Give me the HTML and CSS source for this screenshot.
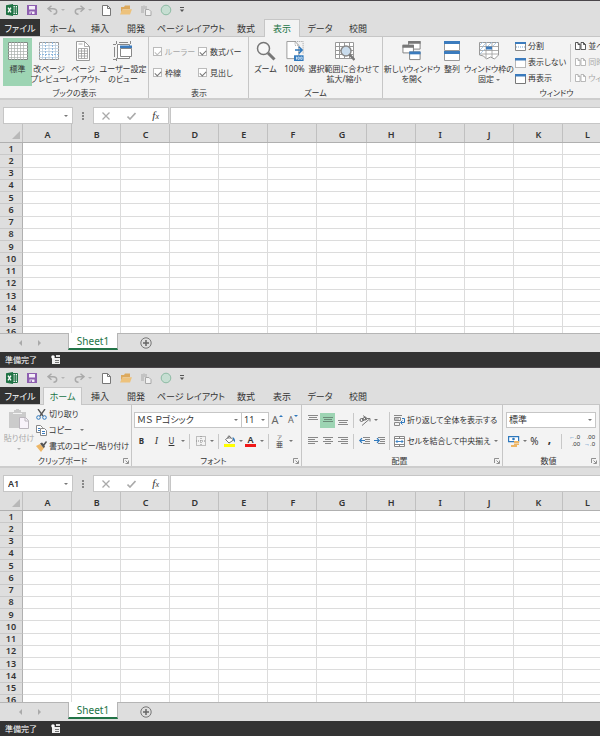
FILE: index.html
```html
<!DOCTYPE html>
<html lang="ja">
<head>
<meta charset="utf-8">
<title>Excel</title>
<link rel="stylesheet" href="styles.css">
</head>
<body>
<svg class="defs" aria-hidden="true">
  <symbol id="excel" viewBox="0 0 12 12"><path fill="#1f7244" d="M0 1.3 7 0v12L0 10.7z"/><path fill="#fff" stroke="#1f7244" d="M7 1.5h4.5v9H7z"/><path stroke="#1f7244" d="M7 4h4.5M7 6h4.5M7 8h4.5M9.3 1.5v9"/><path stroke="#fff" stroke-width="1.3" d="M2 3.7 5 8.3M5 3.7 2 8.3"/></symbol>
  <symbol id="save" viewBox="0 0 10 10"><path fill="#8e5fb0" d="M0 0h10v10H0z"/><path fill="#f4eef8" d="M2 1h6v3.5H2zM2.5 6.5h5V9h-5z"/><path fill="#8e5fb0" d="M3.5 7.2H5V9H3.5z"/></symbol>
  <symbol id="undo" viewBox="0 0 11 10"><path fill="none" stroke="#a9a9a9" stroke-width="1.5" d="M4.5.7 1 3.7l3.5 3M1.3 3.7H6c2.300 0 3.700 1 3.700 2.800S8.500 9.200 6.500 9.200"/></symbol>
  <symbol id="page" viewBox="0 0 9 11"><path fill="#fff" stroke="#777" d="M.5.5h5l3 3v7h-8z"/><path fill="none" stroke="#777" d="M5.500.5v3h3"/></symbol>
  <symbol id="folder" viewBox="0 0 12 10"><path fill="#dca95d" d="M1 2h3l1-1.500h5V4H3L1 8z"/><path fill="#edc27c" d="M2.500 4.200H12L10 9.500H0z"/></symbol>
  <symbol id="pasteq" viewBox="0 0 12 11"><path fill="#c3c3c3" d="M1 1h2l1-1 1 1h2v3H4v4H1z"/><path fill="#f2f2f2" stroke="#a8a8a8" d="M5.500 4.500h3.500l2 2v4H5.500z"/></symbol>
  <symbol id="circle" viewBox="0 0 12 12"><circle cx="6" cy="6" r="4.800" fill="#c6ded2" stroke="#8dbba4"/></symbol>
  <symbol id="more" viewBox="0 0 6 6"><path stroke="#555" d="M1 .5h4"/><path fill="#555" d="M.8 2.500h4.400L3 5z"/></symbol>
  <symbol id="normal" viewBox="0 0 22 20"><path fill="#fff" stroke="#7d8a82" d="M1.500 1.500h19v17h-19z"/><path stroke="#a8afab" stroke-width=".7" d="M1 4.500h20M1 7.500h20M1 10.500h20M1 13.500h20M1 16.500h20M4.500 1v18M7.500 1v18M10.500 1v18M13.500 1v18M16.500 1v18"/></symbol>
  <symbol id="breaks" viewBox="0 0 22 20"><path fill="#fff" stroke="#999" d="M1.500 1.500h19v17h-19z"/><path stroke="#b9cbdc" stroke-width=".8" d="M1 4.500h20M1 7.500h20M1 10.500h20M1 16.500h20M4.500 1v18M11 1v18M17.500 1v18"/><path stroke="#8fb8de" stroke-dasharray="2 1" d="M1 13.500h20M7.500 1v18M14.500 1v18"/></symbol>
  <symbol id="layout" viewBox="0 0 18 20"><path fill="#fff" stroke="#999" d="M2.500.5h8l5 5v14h-13z"/><path fill="none" stroke="#999" stroke-width=".8" d="M10.500.5v5h5M4.500 7.500h9v10h-9zM4.500 10h9M4.500 12.500h9M4.500 15h9M7.500 7.500v10M10.500 7.500v10M4.500 3h4"/></symbol>
  <symbol id="custom" viewBox="0 0 20 20"><path fill="none" stroke="#888" d="M3.500 0v3M0 3.500h3M17.500 0v3M1.500 6v10M0 18.500h3M3.500 17v3M6 1.500h9"/><path fill="#fff" stroke="#888" d="M4.500 3.500h12v14h-12z"/><path fill="#3b7bbd" d="M7 4.500h12v3H7z"/><path fill="#fff" stroke="#888" d="M7.500 7.500h11v8h-11z"/></symbol>
  <symbol id="lens" viewBox="0 0 20 20"><circle cx="7.500" cy="7.500" r="6" fill="#f8f8f8" stroke="#777" stroke-width="1.500"/><path stroke="#777" stroke-width="3" d="m12 12 6.500 6.500"/></symbol>
  <symbol id="hundred" viewBox="0 0 20 21"><path fill="#fff" stroke="#999" d="M1.500.5H10l4 4v14H1.500z"/><path fill="none" stroke="#999" stroke-dasharray="1 1" d="M10 .5h8.500V14M10 .5v4h4"/><path fill="none" stroke="#2e78bd" stroke-width="1.600" d="M10 9.500h7M14 6l3.500 3.500L14 13"/><path fill="#2e78bd" d="M9 15h10v6H9z"/><path stroke="#e4effa" d="M11.500 16.500v3"/><path fill="none" stroke="#e4effa" stroke-width=".8" d="M13 16.800h1.500v2.500H13zM16 16.800h1.500v2.500H16z"/></symbol>
  <symbol id="fit" viewBox="0 0 21 20"><path fill="#fff" stroke="#999" d="M1.500 1.500h18v16h-18zM1.500 5.500h18M1.500 9.500h18M1.500 13.500h18M5.500 1.500v16M10.500 1.500v16M15.500 1.500v16"/><circle cx="12" cy="10" r="5" fill="#c9dced" stroke="#888" stroke-width="1.500"/><path stroke="#777" stroke-width="2.500" d="m15.500 13.500 5 5.500"/></symbol>
  <symbol id="newwin" viewBox="0 0 20 21"><g fill="#fff" stroke="#808080"><path d="M6.500.5h12v8h-12z"/><path d="M.5 4.500h11v8H.5z"/><path d="M7.500 11.500h11v8h-11z"/></g><path fill="#777" d="M6 0h13v3H6zM0 4h12v3H0z"/><path fill="#3b7bbd" d="M7 11h12v3H7z"/></symbol>
  <symbol id="arrange" viewBox="0 0 18 20"><path fill="#fff" stroke="#999" d="M1.500.5h15v9h-15zM1.500 10.500h15v9h-15z"/><path fill="#3b7bbd" d="M1 0h16v3H1zM1 10h16v3H1z"/></symbol>
  <symbol id="freeze" viewBox="0 0 20 20"><path fill="#fff" stroke="#999" d="M.5 1.500h19V14l-4 4-4-2-4 2-3-3-4-1z"/><path fill="none" stroke="#999" stroke-width=".8" d="M0 5.500h20M0 9.500h20M0 13h19M7 1v16M13 1v16"/><path stroke="#9cbfe0" stroke-width=".8" d="m1 4 3-3M4 5l4-4M9 5l4-4M14 5l4-4M1 9l4-4M1 13l5-5"/><path fill="#3b7bbd" d="M7 5.500h6v3H7z"/></symbol>
  <symbol id="split" viewBox="0 0 11 11"><path fill="#fff" stroke="#888" d="M.5 1.500h10v8H.5z"/><path fill="#3b7bbd" d="M0 1h11v2H0z"/><path stroke="#7ba6d1" stroke-dasharray="1 1" d="M1 6h9"/></symbol>
  <symbol id="hide" viewBox="0 0 11 11"><path fill="#fff" stroke="#777" stroke-dasharray="1 1" d="M.5 1.500h10v9H.5z"/><path fill="#3b7bbd" d="M0 1h11v2.500H0z"/></symbol>
  <symbol id="show" viewBox="0 0 11 11"><path fill="#fff" stroke="#777" d="M.5 1.500h10v9H.5z"/><path fill="#3b7bbd" d="M0 1h11v2.500H0z"/></symbol>
  <symbol id="side" viewBox="0 0 11 10"><path fill="#fff" stroke="currentColor" stroke-width=".8" d="M.5 1.500h2.500l2 2v5H.5zM6 1.500h2.500l2 2v5H6zM3 1.500v2h2M8.500 1.500v2h2"/></symbol>
  <symbol id="paste" viewBox="0 0 20 21"><path fill="#cbcbcb" d="M0 3h5V1h2V0h3v1h2v2h5v6h-6v10H0z"/><path stroke="#f3f3f3" d="M4 4.500h9"/><path fill="#f8f3fa" stroke="#bbb6bd" d="M10.500 8.500h6l3 3v8h-9z"/><path fill="none" stroke="#bbb6bd" d="M16 8.500v3.500h3.500"/></symbol>
  <symbol id="cut" viewBox="0 0 11 11"><path stroke="#555" stroke-width="1.300" d="m2 0 5 7M9 0 4 7"/><circle cx="2.500" cy="8.500" r="1.800" fill="none" stroke="#2e78bd"/><circle cx="8.500" cy="8.500" r="1.800" fill="none" stroke="#2e78bd"/></symbol>
  <symbol id="copy" viewBox="0 0 11 11"><path fill="#fff" stroke="#888" d="M.5.5h4l2 2v5h-6z"/><path fill="#fff" stroke="#888" d="M4.500 3.500h4l2 2v5h-6z"/><path stroke="#3b7bbd" d="M2 3.500h2M2 5.500h2M6 6.500h3M6 8.500h3"/></symbol>
  <symbol id="brush" viewBox="0 0 11 11"><path fill="#edb666" d="m0 5 4-2 4 4-3 4z"/><path fill="#555" d="m4 2.500 2-1 1.500 1.500L10 0l1 1-2.500 3.500L9 6 7.500 7z"/></symbol>
  <symbol id="launch" viewBox="0 0 6 6"><path fill="none" stroke="#777" stroke-width=".8" d="M.5 5V.5H5M2.500 2.500 5 5M5.500 2.500v3h-3"/></symbol>
  <symbol id="border" viewBox="0 0 10 10"><path fill="none" stroke="#888" stroke-dasharray="1 1" d="M.5.5h9v9h-9zM5 0v10M0 5h10"/></symbol>
  <symbol id="fill" viewBox="0 0 12 12"><path fill="#fff" stroke="#666" stroke-width=".9" d="m1.500 4.500 4-3 4 3.500-4.500 3z"/><path fill="none" stroke="#666" stroke-width=".8" d="M4 4V1.500q1-1.500 2 0V4"/><path fill="#2e78bd" d="M8.500 2Q11.500 3 11 7.500 9 6 8.500 2z"/><path fill="#ff0" d="M0 9h11v3H0z"/></symbol>
  <symbol id="atop" viewBox="0 0 10 12"><path stroke="#888" d="M0 1.500h10M1 3.500h8M0 5.500h10"/></symbol>
  <symbol id="amid" viewBox="0 0 10 12"><path stroke="#6c8b79" d="M0 3.500h10M1 5.500h8M0 7.500h10"/></symbol>
  <symbol id="abot" viewBox="0 0 10 12"><path stroke="#888" d="M0 6.500h10M1 8.500h8M0 10.500h10"/></symbol>
  <symbol id="left" viewBox="0 0 10 8"><path stroke="#888" d="M0 .5h10M0 2.500h7M0 4.500h10M0 6.500h7"/></symbol>
  <symbol id="center" viewBox="0 0 10 8"><path stroke="#888" d="M0 .5h10M2 2.500h6M0 4.500h10M2 6.500h6"/></symbol>
  <symbol id="right" viewBox="0 0 10 8"><path stroke="#888" d="M0 .5h10M3 2.500h7M0 4.500h10M3 6.500h7"/></symbol>
  <symbol id="outdent" viewBox="0 0 12 8"><path stroke="#888" d="M4 .5h7M6 2.500h5M6 4.500h5M4 6.500h7"/><path fill="none" stroke="#2e78bd" stroke-width="1.200" d="M6 3.500H1M3 1.200.8 3.500 3 5.800"/></symbol>
  <symbol id="indent" viewBox="0 0 12 8"><path stroke="#888" d="M4 .5h7M6 2.500h5M6 4.500h5M4 6.500h7"/><path fill="none" stroke="#2e78bd" stroke-width="1.200" d="M0 3.500h5M3 1.200l2.200 2.300L3 5.800"/></symbol>
  <symbol id="orient" viewBox="0 0 12 11"><path fill="none" stroke="#777" d="M3 10.500 10.500 4M8 3.500h3v3"/><circle cx="2.500" cy="5" r="1.500" fill="none" stroke="#666"/><circle cx="6" cy="3.500" r="1.500" fill="none" stroke="#666"/><path stroke="#666" d="m3 3 2 3M4.500.5 7.500 5"/></symbol>
  <symbol id="wrap" viewBox="0 0 11 11"><path fill="none" stroke="#888" d="M0 .5h8M.5 2.500h6v3h-6zM.5 7.500h5v3h-5zM1 4h4"/><path fill="none" stroke="#2e78bd" d="M8 3.500h2.500v4H7M8.500 5.500l-2 2 2 2"/></symbol>
  <symbol id="merge" viewBox="0 0 11 11"><path fill="#fff" stroke="#888" d="M.5.5h10v10H.5zM.5 2.500h10M.5 8.500h10M5.500.5v2M5.500 8.500v2"/><path fill="none" stroke="#2e78bd" stroke-width=".9" d="M2 5.500h7M3.500 4 2 5.500 3.500 7M7.500 4 9 5.500 7.500 7"/></symbol>
  <symbol id="money" viewBox="0 0 12 11"><path fill="#fff" stroke="#2e78bd" stroke-width="1.200" d="M.6.6h10v5H.6z"/><circle cx="5.500" cy="3" r="1.300" fill="#2e78bd"/><path fill="#edb666" d="M6 5h5v2H6zM6 7.500h5v1.500H6zM3 9h6v2H3z"/></symbol>
  <symbol id="cross" viewBox="0 0 8 8"><path stroke="#aaa" stroke-width="1.300" d="m.5.5 7 7M7.500.5l-7 7"/></symbol>
  <symbol id="check" viewBox="0 0 9 8"><path fill="none" stroke="#aaa" stroke-width="1.600" d="m.5 4.500 2.500 2.500 5.500-6"/></symbol>
  <symbol id="plus" viewBox="0 0 12 12"><circle cx="6" cy="6" r="5.200" fill="none" stroke="#777"/><path stroke="#666" stroke-width="1.500" d="M6 3v6M3 6h6"/></symbol>
  <symbol id="macro" viewBox="0 0 9 9"><path fill="#eee" d="M1 3h8v6H1z"/><path stroke="#777" d="M4 5.500h4M4 7.500h4"/><circle cx="2" cy="2" r="1.800" fill="#fff"/><path fill="#ddd" d="M5 0h4v2H5z"/></symbol>
</svg>

<section class="window">
  <header class="quick">
    <span class="q"><svg width="12" height="12"><use href="#excel"/></svg></span>
    <button class="q" aria-label="上書き保存"><svg width="10" height="10"><use href="#save"/></svg></button>
    <button class="q wide" aria-label="元に戻す"><svg width="11" height="10"><use href="#undo"/></svg><i class="caret pale"></i></button>
    <button class="q wide" aria-label="やり直し"><svg class="flip" width="11" height="10"><use href="#undo"/></svg><i class="caret pale"></i></button>
    <button class="q" aria-label="新規作成"><svg width="9" height="11"><use href="#page"/></svg></button>
    <button class="q" aria-label="開く"><svg width="12" height="10"><use href="#folder"/></svg></button>
    <button class="q" aria-label="貼り付け"><svg width="12" height="11"><use href="#pasteq"/></svg></button>
    <button class="q" aria-label="図形"><svg width="12" height="12"><use href="#circle"/></svg></button>
    <button class="q slim" aria-label="カスタマイズ"><svg width="6" height="6"><use href="#more"/></svg></button>
  </header>
  <nav class="tabs">
    <a href="#" class="file">ファイル</a><a href="#">ホーム</a><a href="#">挿入</a><a href="#">開発</a><a href="#" class="long">ページ レイアウト</a><a href="#">数式</a><a href="#" class="active">表示</a><a href="#">データ</a><a href="#">校閲</a>
  </nav>
  <div class="ribbon">
    <div class="group g-views">
      <div class="tools">
        <button class="big w29 on"><svg width="22" height="20"><use href="#normal"/></svg><span>標準</span></button>
        <button class="big w34"><svg width="22" height="20"><use href="#breaks"/></svg><span>改ページ<br>プレビュー</span></button>
        <button class="big w34"><svg width="18" height="20"><use href="#layout"/></svg><span>ページ<br>レイアウト</span></button>
        <button class="big w46"><svg width="20" height="20"><use href="#custom"/></svg><span>ユーザー設定<br>のビュー</span></button>
      </div>
      <div class="title"><span>ブックの表示</span></div>
    </div>
    <div class="group g-show">
      <div class="checks">
        <label class="off"><input type="checkbox" checked disabled>ルーラー</label>
        <label><input type="checkbox" checked>数式バー</label>
        <label><input type="checkbox" checked>枠線</label>
        <label><input type="checkbox" checked>見出し</label>
      </div>
      <div class="title"><span>表示</span></div>
    </div>
    <div class="group g-zoom">
      <div class="tools">
        <button class="big w29"><svg width="20" height="20"><use href="#lens"/></svg><span>ズーム</span></button>
        <button class="big w29"><svg width="20" height="20"><use href="#hundred"/></svg><span>100%</span></button>
        <button class="big w70"><svg width="21" height="20"><use href="#fit"/></svg><span>選択範囲に合わせて<br>拡大/縮小</span></button>
      </div>
      <div class="title"><span>ズーム</span></div>
    </div>
    <div class="group g-window">
      <div class="tools">
        <button class="big w54"><svg width="20" height="20"><use href="#newwin"/></svg><span>新しいウィンドウ<br>を開く</span></button>
        <button class="big w26"><svg width="18" height="20"><use href="#arrange"/></svg><span>整列</span></button>
        <button class="big w48"><svg width="20" height="20"><use href="#freeze"/></svg><span>ウィンドウ枠の<br>固定 <i class="caret"></i></span></button>
        <div class="list">
          <button><svg width="11" height="11"><use href="#split"/></svg>分割</button>
          <button><svg width="11" height="11"><use href="#hide"/></svg>表示しない</button>
          <button><svg width="11" height="11"><use href="#show"/></svg>再表示</button>
        </div>
        <i class="rule tall"></i>
        <div class="list compare">
          <button><svg width="11" height="10"><use href="#side"/></svg>並べて比較</button>
          <button disabled><svg width="11" height="10"><use href="#side"/></svg>同時にスクロール</button>
          <button disabled><svg width="11" height="10"><use href="#side"/></svg>ウィンドウの位置</button>
        </div>
      </div>
      <div class="title"><span>ウィンドウ</span></div>
    </div>
  </div>
  <div class="formula">
    <div class="namebox"><input aria-label="名前ボックス" value=""><i class="caret"></i></div>
    <span class="dots"></span>
    <div class="fxbox"><button aria-label="キャンセル"><svg width="8" height="8"><use href="#cross"/></svg></button><button aria-label="入力"><svg width="9" height="8"><use href="#check"/></svg></button><button class="fx"><em>f<small>x</small></em></button></div>
    <input class="entry" aria-label="数式">
  </div>
  <div class="sheet"></div>
  <footer class="sheets">
    <button class="nav back" aria-label="前"></button><button class="nav next" aria-label="次"></button>
    <a href="#" class="sheettab">Sheet1</a>
    <button class="add" aria-label="新しいシート"><svg width="12" height="12"><use href="#plus"/></svg></button>
  </footer>
  <div class="status">準備完了<svg width="9" height="9"><use href="#macro"/></svg></div>
</section>

<section class="window second">
  <header class="quick">
    <span class="q"><svg width="12" height="12"><use href="#excel"/></svg></span>
    <button class="q" aria-label="上書き保存"><svg width="10" height="10"><use href="#save"/></svg></button>
    <button class="q wide" aria-label="元に戻す"><svg width="11" height="10"><use href="#undo"/></svg><i class="caret pale"></i></button>
    <button class="q wide" aria-label="やり直し"><svg class="flip" width="11" height="10"><use href="#undo"/></svg><i class="caret pale"></i></button>
    <button class="q" aria-label="新規作成"><svg width="9" height="11"><use href="#page"/></svg></button>
    <button class="q" aria-label="開く"><svg width="12" height="10"><use href="#folder"/></svg></button>
    <button class="q" aria-label="貼り付け"><svg width="12" height="11"><use href="#pasteq"/></svg></button>
    <button class="q" aria-label="図形"><svg width="12" height="12"><use href="#circle"/></svg></button>
    <button class="q slim" aria-label="カスタマイズ"><svg width="6" height="6"><use href="#more"/></svg></button>
  </header>
  <nav class="tabs">
    <a href="#" class="file">ファイル</a><a href="#" class="active">ホーム</a><a href="#">挿入</a><a href="#">開発</a><a href="#" class="long">ページ レイアウト</a><a href="#">数式</a><a href="#">表示</a><a href="#">データ</a><a href="#">校閲</a>
  </nav>
  <div class="ribbon">
    <div class="group g-clip">
      <div class="tools">
        <button class="big w34" disabled><svg width="20" height="21"><use href="#paste"/></svg><span>貼り付け<br><i class="caret pale"></i></span></button>
        <div class="list">
          <button><svg width="11" height="11"><use href="#cut"/></svg>切り取り</button>
          <button><svg width="11" height="11"><use href="#copy"/></svg>コピー <i class="caret"></i></button>
          <button><svg width="11" height="11"><use href="#brush"/></svg>書式のコピー/貼り付け</button>
        </div>
      </div>
      <div class="title"><span>クリップボード</span><svg width="6" height="6"><use href="#launch"/></svg></div>
    </div>
    <div class="group g-font">
      <div class="rows">
        <div class="row">
          <div class="combo name"><select aria-label="フォント"><option>ＭＳ Ｐゴシック</option></select><i class="caret"></i></div><div class="combo size"><select aria-label="サイズ"><option>11</option></select><i class="caret"></i></div>
          <button class="b16 grow">A<i class="tick"></i></button><button class="b16 shrink">A<i class="tick down"></i></button>
        </div>
        <div class="row">
          <button class="b15"><b>B</b></button><button class="b15 italic">I</button><button class="b15"><u>U</u></button><i class="caret"></i><i class="rule"></i>
          <button class="b15"><svg width="10" height="10"><use href="#border"/></svg></button><i class="caret"></i><i class="rule"></i>
          <button class="b15"><svg width="12" height="12"><use href="#fill"/></svg></button><i class="caret"></i>
          <button class="b15"><span class="red">A</span></button><i class="caret"></i><i class="rule"></i>
          <button class="b15 ruby"><small>ア</small><span>亜</span></button><i class="caret"></i>
        </div>
      </div>
      <div class="title"><span>フォント</span><svg width="6" height="6"><use href="#launch"/></svg></div>
    </div>
    <div class="group g-align">
      <div class="tools">
        <div class="rows">
          <div class="row">
            <button class="b15"><svg width="10" height="12"><use href="#atop"/></svg></button><button class="b15 on"><svg width="10" height="12"><use href="#amid"/></svg></button><button class="b15"><svg width="10" height="12"><use href="#abot"/></svg></button><i class="rule"></i>
            <button class="b15"><svg width="12" height="11"><use href="#orient"/></svg></button><i class="caret"></i>
          </div>
          <div class="row">
            <button class="b15"><svg width="10" height="8"><use href="#left"/></svg></button><button class="b15"><svg width="10" height="8"><use href="#center"/></svg></button><button class="b15"><svg width="10" height="8"><use href="#right"/></svg></button><i class="rule"></i>
            <button class="b15"><svg width="12" height="8"><use href="#outdent"/></svg></button><button class="b15"><svg width="12" height="8"><use href="#indent"/></svg></button>
          </div>
        </div>
        <i class="rule tall"></i>
        <div class="rows wraps">
          <button class="row"><svg width="11" height="11"><use href="#wrap"/></svg>折り返して全体を表示する</button>
          <button class="row"><svg width="11" height="11"><use href="#merge"/></svg>セルを結合して中央揃え<i class="caret"></i></button>
        </div>
      </div>
      <div class="title"><span>配置</span><svg width="6" height="6"><use href="#launch"/></svg></div>
    </div>
    <div class="group g-number">
      <div class="rows">
        <div class="row"><div class="combo format"><select aria-label="表示形式"><option>標準</option></select><i class="caret"></i></div></div>
        <div class="row">
          <button class="b15"><svg width="12" height="11"><use href="#money"/></svg></button><i class="caret"></i>
          <button class="b15 pct">%</button><button class="b15 comma">,</button><i class="rule"></i>
          <button class="b15 dec"><span><i>←</i>.0</span><span>.00</span></button><button class="b15 dec"><span>.00</span><span><i>→</i>.0</span></button>
        </div>
      </div>
      <div class="title"><span>数値</span><svg width="6" height="6"><use href="#launch"/></svg></div>
    </div>
  </div>
  <div class="formula">
    <div class="namebox"><input aria-label="名前ボックス" value="A1"><i class="caret"></i></div>
    <span class="dots"></span>
    <div class="fxbox"><button aria-label="キャンセル"><svg width="8" height="8"><use href="#cross"/></svg></button><button aria-label="入力"><svg width="9" height="8"><use href="#check"/></svg></button><button class="fx"><em>f<small>x</small></em></button></div>
    <input class="entry" aria-label="数式">
  </div>
  <div class="sheet"></div>
  <footer class="sheets">
    <button class="nav back" aria-label="前"></button><button class="nav next" aria-label="次"></button>
    <a href="#" class="sheettab">Sheet1</a>
    <button class="add" aria-label="新しいシート"><svg width="12" height="12"><use href="#plus"/></svg></button>
  </footer>
  <div class="status">準備完了<svg width="9" height="9"><use href="#macro"/></svg></div>
</section>
<script src="script.js"></script>
</body>
</html>
```

FILE: styles.css
```css
* { box-sizing: border-box; }
body {
  margin: 0;
  min-height: 100vh;
  display: flex;
  flex-direction: column;
  overflow-x: hidden;
  background: #dedede;
  color: #333;
  font: 8px/10px "Noto Sans", "Noto Sans CJK JP", sans-serif;
  font-feature-settings: "palt";
}
button, input, select {
  margin: 0;
  padding: 0;
  border: 0;
  background: none;
  color: inherit;
  font: inherit;
  font-feature-settings: inherit;
}
a { color: inherit; text-decoration: none; }
svg { flex: none; fill: none; }
.defs { position: absolute; width: 0; height: 0; }

.window { display: flex; flex-direction: column; border-top: 1px solid #4a464a; overflow: hidden; }
.second { flex: 1 0 auto; padding-top: 1px; }

.caret { flex: none; display: inline-block; width: 4px; border: 2px solid transparent; border-top-color: #777; border-bottom: 0; vertical-align: middle; }
.caret.pale { border-top-color: #b5b5b5; }
.rule { flex: none; width: 1px; height: 15px; background: #c8c8c8; }
.rule.tall { height: 38px; align-self: center; }

.quick { display: flex; height: 18px; padding-left: 2px; }
.q { flex: none; display: flex; align-items: center; justify-content: center; width: 20px; }
.q.wide { width: 27px; gap: 3px; }
.q.slim { width: 12px; }
.flip { transform: scaleX(-1); }

.tabs { display: flex; height: 18px; margin-bottom: -1px; font-size: 9px; }
.tabs a { flex: none; width: 36px; display: flex; align-items: center; justify-content: center; border: 1px solid transparent; border-bottom: 0; white-space: nowrap; }
.tabs a:nth-child(2) { width: 39px; }
.tabs a:nth-child(8) { width: 40px; }
.tabs .file { width: 40px; margin-right: 3px; background: #333; color: #fff; }
.tabs .long { width: 74px; }
.tabs .active { z-index: 1; background: #f3f3f3; border-color: #c6c6c6; color: #217346; }

.ribbon { display: flex; height: 64px; background: #f3f3f3; border-top: 1px solid #c6c6c6; border-bottom: 2px solid #cdcdcd; }
.group { flex: none; display: flex; flex-direction: column; padding: 1px 2px 0 3px; border-right: 1px solid #c6c6c6; }
.g-views { width: 149px; }
.g-show { width: 100px; }
.g-zoom { width: 134px; padding-left: 2px; }
.g-window { width: 348px; padding-left: 2px; }
.g-clip { width: 132px; padding-left: 2px; }
.g-font { width: 170px; }
.g-align { width: 201px; }
.g-number { width: 97px; }

.tools { display: flex; height: 49px; }
.big { flex: none; display: flex; flex-direction: column; align-items: center; gap: 3px; height: 48px; padding-top: 3px; text-align: center; white-space: nowrap; }
.big:disabled, .off, .list button:disabled { color: #a8a8a8; }
.on { background: #9dd4b3; }
.w26 { width: 26px; }
.w29 { width: 29px; }
.w34 { width: 34px; }
.w46 { width: 46px; }
.w48 { width: 48px; }
.w54 { width: 54px; }
.w70 { width: 70px; }
.list { flex: none; display: grid; grid-template-rows: repeat(3, 16px); margin-right: 4px; }
.list button { display: flex; align-items: center; gap: 2px; white-space: nowrap; }
.list .caret { margin-left: 6px; }
.g-window .list { margin-left: 2px; }
.g-window .compare { margin-left: 4px; }

.title { display: flex; align-items: center; height: 11px; }
.title span { flex: 1; text-align: center; }

.checks { display: grid; grid-template-columns: 45px 1fr; grid-template-rows: 21px 21px; height: 49px; padding-top: 3px; }
.checks label { display: flex; align-items: center; gap: 3px; white-space: nowrap; }
.checks input { appearance: none; display: grid; place-items: center; width: 9px; height: 9px; margin-left: 1px; border: 1px solid #bbb; background: #fff; }
.checks input::before { content: ""; width: 5px; height: 3px; border: solid #777; border-width: 0 0 1px 1px; transform: rotate(-45deg); }
.checks .off input::before { border-color: #bbb; }

.rows { display: flex; flex-direction: column; gap: 5px; height: 49px; padding-top: 6px; }
.row { display: flex; align-items: center; height: 16px; white-space: nowrap; }
.b15, .b16 { flex: none; display: flex; align-items: center; justify-content: center; width: 15px; height: 15px; }
.b16 { width: 16px; color: #666; }
.combo { flex: none; display: flex; align-items: center; height: 16px; padding-right: 3px; border: 1px solid #c6c6c6; background: #fff; font-size: 9px; }
.combo select { appearance: none; flex: 1; min-width: 0; padding-left: 2px; }
.combo.name { width: 108px; }
.combo.size { width: 28px; margin-left: -1px; }
.combo.format { width: 90px; }
.g-font { padding-left: 2px; }
.g-font .row .rule { margin: 0 3px 0 4px; }
.g-font .row .caret { margin-left: 2px; }
.g-font .combo .caret { margin: 0; }
.grow { font-size: 11px; }
.shrink { font-size: 9px; }
.tick { align-self: flex-start; margin-top: 2px; border: 2px solid transparent; border-top: 0; border-bottom-color: #2e78bd; }
.tick.down { border-top: 2px solid #2e78bd; border-bottom: 0; }
.italic { font-family: "Liberation Serif", serif; font-style: italic; font-size: 10px; }
.red { height: 11px; border-bottom: 3px solid #f01818; padding: 0 2px; font-weight: 600; line-height: 8px; font-size: 9px; }
.ruby { flex-direction: column; font-size: 7px; line-height: 8px; }
.ruby small { font-size: 5px; line-height: 7px; }
.g-align .row .rule { margin: 0 3px; }
.g-align .row .caret { margin-left: 2px; }
.g-align .tools > .rule { margin: 0 4px 0 2px; }
.g-align .tools > .rows { flex: none; }
.wraps .row { gap: 2px; }
.wraps .row .caret { margin-left: 1px; }
.g-number .row .caret { margin-left: 2px; }
.g-number .combo .caret { margin: 0; }
.g-number .row .rule { margin: 0 3px 0 4px; }
.pct { font-size: 10px; }
.comma { padding-bottom: 5px; font-size: 12px; font-weight: 700; }
.dec { flex-direction: column; font: 6px/7px "Liberation Sans", "DejaVu Sans", sans-serif; align-items: flex-end; }
.dec i { color: #2e78bd; font-style: normal; }

.formula { display: flex; align-items: center; height: 24px; padding: 7px 0 0 3px; }
.namebox, .fxbox, .entry { height: 17px; border: 1px solid #c6c6c6; background: #fff; }
.namebox { flex: none; display: flex; align-items: center; width: 70px; padding: 0 4px; }
.namebox input { flex: 1; min-width: 0; font-size: 9px; font-weight: 600; }
.dots { flex: none; width: 2px; height: 8px; margin: 0 9px; border-left: 2px dotted #888; }
.fxbox { flex: none; display: flex; width: 76px; }
.fxbox button { flex: 1; display: flex; align-items: center; justify-content: center; }
.fx { font: 11px/12px "Liberation Serif", serif; }
.fx small { font-size: 8px; }
.entry { flex: 1; min-width: 0; margin-left: 1px; border-right: 0; }

.sheet { height: 209px; overflow: hidden; }
.second .sheet { flex: 1 0 209px; height: 0; }
.grid { table-layout: fixed; border-collapse: separate; border-spacing: 0; width: 612px; min-width: 100%; height: 215px; background: #fff; font-size: 9px; line-height: 10px; }
.grid th { padding: 0; background: #dedede; border-right: 1px solid #c9c9c9; border-bottom: 1px solid #c9c9c9; font-weight: 600; }
.grid thead th { height: 19px; padding-top: 4px; border-bottom-color: #b0b0b0; background: linear-gradient(to right, #dedede calc(100% - 1px), #c0c0c0 0); border-right: 0; }
.grid th:first-child { width: 23px; }
.grid tbody th { border-right-color: #b0b0b0; }
.grid td { padding: 0; border-right: 1px solid #dcdcdc; border-bottom: 1px solid #dcdcdc; }
.grid .corner::after { content: ""; display: block; width: 0; margin-left: auto; margin-right: 3px; border: 4px solid transparent; border-right-color: #b8b8b8; border-bottom-color: #b8b8b8; }

.sheets { display: flex; align-items: flex-start; height: 19px; border-top: 1px solid #b5b5b5; }
.nav { width: 4px; height: 6px; margin: 6px 0 0 18px; border: solid transparent; border-width: 3px 0; }
.nav.back { border-right: 3px solid #aaa; }
.nav.next { margin-left: 16px; border-left: 3px solid #aaa; }
.sheettab { width: 50px; height: 17px; margin: -1px 0 0 26px; background: #fff; border-bottom: 2px solid #217346; border-left: 1px solid #b5b5b5; border-right: 1px solid #b5b5b5; color: #217346; font-size: 10px; line-height: 16px; text-align: center; }
.add { display: flex; margin: 3px 0 0 22px; }
.status { display: flex; align-items: center; gap: 14px; height: 15px; padding-left: 5px; background: #333; color: #fff; }
```

FILE: script.js
```js
const columns = "ABCDEFGHIJKL".split("");
document.querySelectorAll(".sheet").forEach((sheet) => {
  let html = '<table class="grid"><thead><tr><th class="corner"></th>';
  html += columns.map((c) => `<th>${c}</th>`).join("") + "</tr></thead><tbody>";
  for (let row = 1; row <= 16; row++) {
    html += `<tr><th>${row}</th>${"<td></td>".repeat(columns.length)}</tr>`;
  }
  sheet.innerHTML = html + "</tbody></table>";
});
```
